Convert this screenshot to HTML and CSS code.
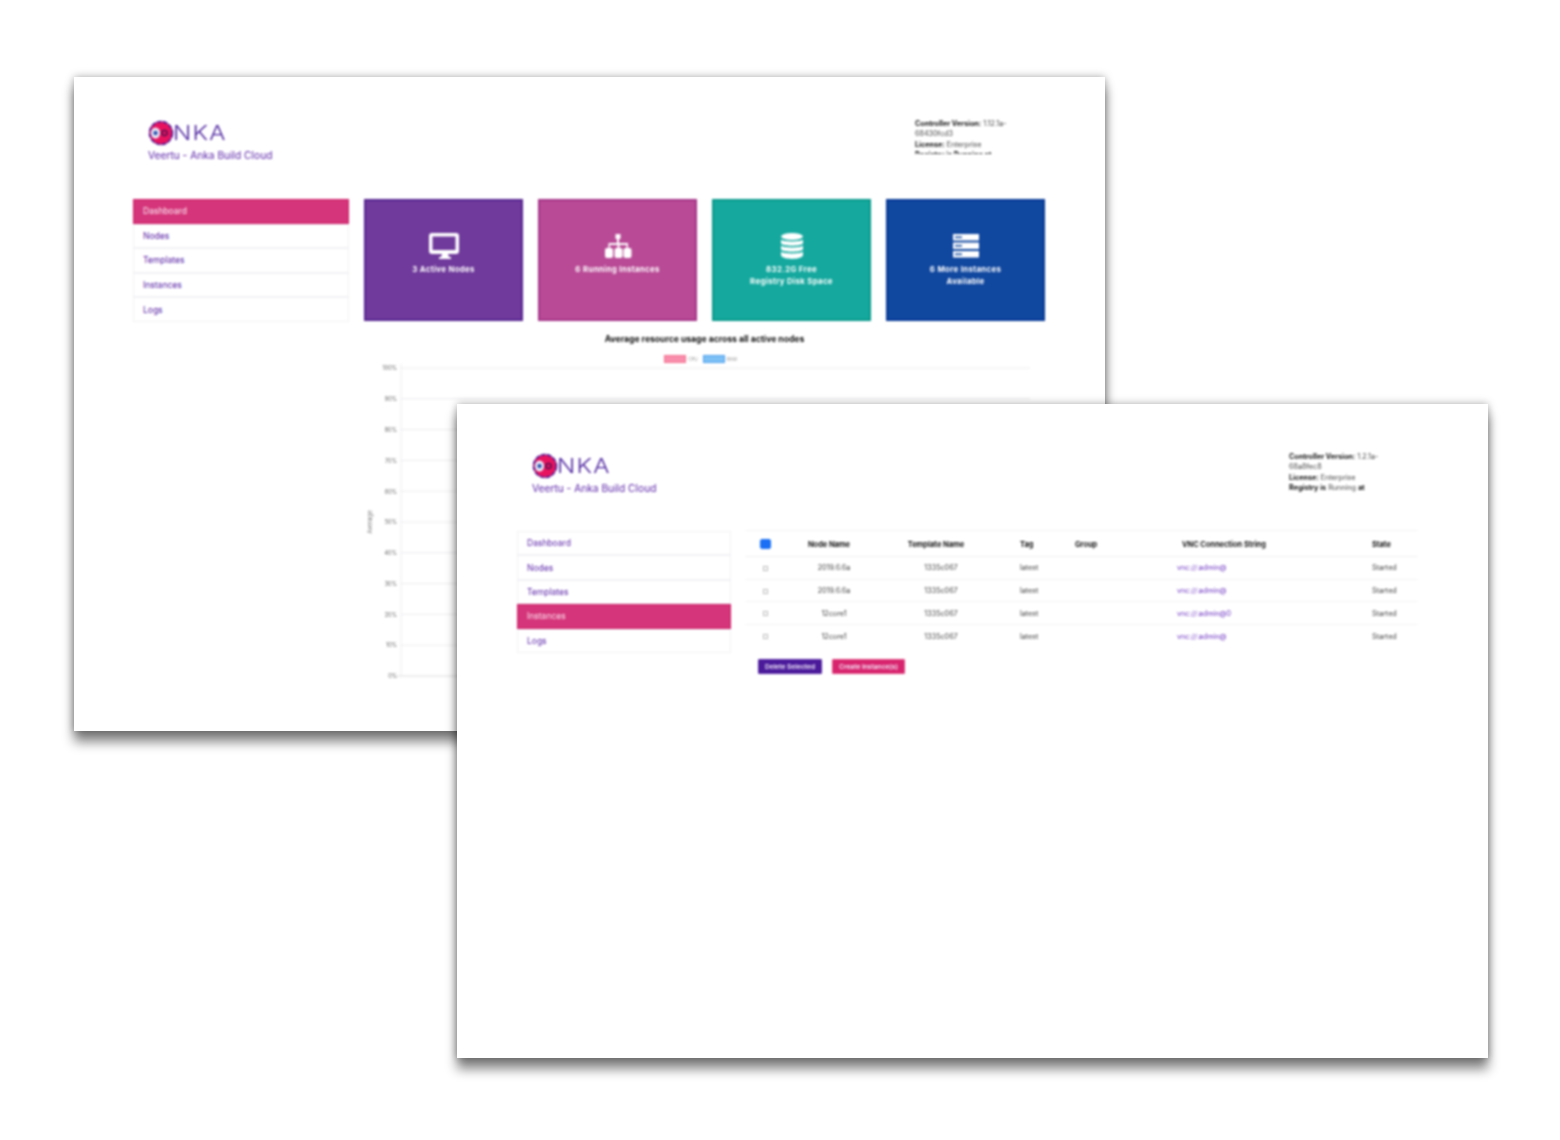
FILE: index.html
```html
<!DOCTYPE html>
<html lang="en">
<head>
    <meta charset="UTF-8" />
    <meta name="viewport" content="width=device-width, initial-scale=1" />
    <title>Anka Build Cloud</title>
    <link rel="stylesheet" href="styles.css">
</head>
<body>
    <div class="canvas">

        <!-- dashboard screenshot -->
        <section class="window window-back">
            <div class="content">
                <header class="page-head">
                    <div class="brand">
                        <div class="logo">
                            <svg class="logo-mark" viewBox="0 0 26 28">
                                <circle cx="13" cy="14" r="11.5" fill="#e8135f" stroke="#4a1a9a" stroke-width="1.6" stroke-dasharray="5 1.2"/>
                                <ellipse cx="7.5" cy="14" rx="4.6" ry="5.5" fill="#e6ecf8"/>
                                <circle cx="7.5" cy="14" r="2.2" fill="#2a4fb0"/>
                                <circle cx="16.5" cy="14" r="2.6" fill="none" stroke="#4a1050" stroke-width="1.4"/>
                            </svg>
                            <span class="logo-text">NKA</span>
                        </div>
                        <p class="brand-name">Veertu - Anka Build Cloud</p>
                    </div>
                    <div class="info">
                        <b>Controller Version:</b> 1.12.1a-<br>68430fcd3<br>
                        <b>License:</b> Enterprise<br>
                        <b>Registry is Running at</b>
                    </div>
                </header>
                <div class="page-body">
                    <nav class="side-nav">
                        <a class="active" href="#">Dashboard</a>
                        <a href="#">Nodes</a>
                        <a href="#">Templates</a>
                        <a href="#">Instances</a>
                        <a href="#">Logs</a>
                    </nav>
                    <main class="dash">
                        <div class="tiles">
                            <div class="tile tile-purple">
                                <svg class="tile-icon" viewBox="0 0 30 26">
                                    <path fill="#fff" d="M3 0h24a3 3 0 0 1 3 3v15a3 3 0 0 1-3 3h-8l1 3h2v2H10v-2h2l1-3H3a3 3 0 0 1-3-3V3a3 3 0 0 1 3-3zm.5 3.500v13.500h23V3.500z"/>
                                </svg>
                                <p>3 Active Nodes</p>
                            </div>
                            <div class="tile tile-pink">
                                <svg class="tile-icon" viewBox="0 0 30 26">
                                    <path fill="#fff" d="M12.500 1h5v5h-1.500v4h9v5h1.500a2 2 0 0 1 2 2v6a2 2 0 0 1-2 2h-4a2 2 0 0 1-2-2v-6a2 2 0 0 1 2-2h1v-3h-7v3h1a2 2 0 0 1 2 2v6a2 2 0 0 1-2 2h-4a2 2 0 0 1-2-2v-6a2 2 0 0 1 2-2h1v-3H7v3h1a2 2 0 0 1 2 2v6a2 2 0 0 1-2 2H4a2 2 0 0 1-2-2v-6a2 2 0 0 1 2-2h1.500v-5h8.500V6h-1.500z"/>
                                </svg>
                                <p>6 Running Instances</p>
                            </div>
                            <div class="tile tile-teal">
                                <svg class="tile-icon" viewBox="0 0 30 26">
                                    <ellipse cx="15" cy="3.500" rx="11" ry="3.500" fill="#fff"/>
                                    <path fill="#fff" d="M4 6.500c2 2.500 20 2.500 22 0v4c-2 3-20 3-22 0zM4 12.500c2 2.500 20 2.500 22 0v4c-2 3-20 3-22 0zM4 18.500c2 2.500 20 2.500 22 0v4c-2 4.500-20 4.500-22 0z"/>
                                </svg>
                                <p>832.2G Free<br>Registry Disk Space</p>
                            </div>
                            <div class="tile tile-blue">
                                <svg class="tile-icon" viewBox="0 0 30 26">
                                    <path fill="#fff" d="M2 1h26v6.500H2zM2 9.500h26V16H2zM2 18h26v6.500H2z"/>
                                    <path fill="#10479f" d="M4 3.500h7v1.500H4zM4 12h7v1.500H4zM4 20.500h7V22H4z"/>
                                </svg>
                                <p>6 More Instances<br>Available</p>
                            </div>
                        </div>
                        <h3 class="chart-title">Average resource usage across all active nodes</h3>
                        <div class="legend">
                            <span class="swatch swatch-cpu"></span><span>CPU</span>
                            <span class="swatch swatch-mem"></span><span>RAM</span>
                        </div>
                        <svg class="chart" viewBox="0 0 681 320">
                            <g class="grid">
                                <path d="M37 6h629M37 36.800h629M37 67.600h629M37 98.400h629M37 129.200h629M37 160h629M37 190.800h629M37 221.600h629M37 252.400h629M37 283.200h629"/>
                                <path d="M37 2v312"/>
                            </g>
                            <path class="baseline" d="M32 314h634"/>
                            <g class="ticks">
                                <text x="33" y="8">100%</text>
                                <text x="33" y="39">90%</text>
                                <text x="33" y="70">80%</text>
                                <text x="33" y="101">70%</text>
                                <text x="33" y="132">60%</text>
                                <text x="33" y="162">50%</text>
                                <text x="33" y="193">40%</text>
                                <text x="33" y="224">30%</text>
                                <text x="33" y="255">20%</text>
                                <text x="33" y="285">10%</text>
                                <text x="33" y="316">0%</text>
                            </g>
                            <text class="axis-name" transform="translate(8 160) rotate(-90)">Average</text>
                        </svg>
                    </main>
                </div>
            </div>
        </section>

        <!-- instances screenshot -->
        <section class="window window-front">
            <div class="content">
                <header class="page-head">
                    <div class="brand">
                        <div class="logo">
                            <svg class="logo-mark" viewBox="0 0 26 28">
                                <circle cx="13" cy="14" r="11.5" fill="#e8135f" stroke="#4a1a9a" stroke-width="1.6" stroke-dasharray="5 1.2"/>
                                <ellipse cx="7.5" cy="14" rx="4.6" ry="5.5" fill="#e6ecf8"/>
                                <circle cx="7.5" cy="14" r="2.2" fill="#2a4fb0"/>
                                <circle cx="16.5" cy="14" r="2.6" fill="none" stroke="#4a1050" stroke-width="1.4"/>
                            </svg>
                            <span class="logo-text">NKA</span>
                        </div>
                        <p class="brand-name">Veertu - Anka Build Cloud</p>
                    </div>
                    <div class="info">
                        <b>Controller Version:</b> 1.2.1a-<br>68a8fec8<br>
                        <b>License:</b> Enterprise<br>
                        <b>Registry is</b> Running <b>at</b>
                    </div>
                </header>
                <div class="page-body">
                    <nav class="side-nav">
                        <a href="#">Dashboard</a>
                        <a href="#">Nodes</a>
                        <a href="#">Templates</a>
                        <a class="active" href="#">Instances</a>
                        <a href="#">Logs</a>
                    </nav>
                    <main class="instances">
                        <table class="table">
                            <thead>
                                <tr>
                                    <th class="col-check"><span class="check check-on"></span></th>
                                    <th class="col-node">Node Name</th>
                                    <th class="col-template">Template Name</th>
                                    <th class="col-tag">Tag</th>
                                    <th class="col-group">Group</th>
                                    <th class="col-vnc">VNC Connection String</th>
                                    <th class="col-state">State</th>
                                </tr>
                            </thead>
                            <tbody>
                                <tr>
                                    <td class="col-check"><span class="check"></span></td>
                                    <td class="col-node">2019.6.6a</td>
                                    <td class="col-template">1335c067</td>
                                    <td class="col-tag">latest</td>
                                    <td class="col-group"></td>
                                    <td class="col-vnc"><a href="#">vnc://:admin@</a></td>
                                    <td class="col-state">Started</td>
                                </tr>
                                <tr>
                                    <td class="col-check"><span class="check"></span></td>
                                    <td class="col-node">2019.6.6a</td>
                                    <td class="col-template">1335c067</td>
                                    <td class="col-tag">latest</td>
                                    <td class="col-group"></td>
                                    <td class="col-vnc"><a href="#">vnc://:admin@</a></td>
                                    <td class="col-state">Started</td>
                                </tr>
                                <tr>
                                    <td class="col-check"><span class="check"></span></td>
                                    <td class="col-node">12core1</td>
                                    <td class="col-template">1335c067</td>
                                    <td class="col-tag">latest</td>
                                    <td class="col-group"></td>
                                    <td class="col-vnc"><a href="#">vnc://:admin@0</a></td>
                                    <td class="col-state">Started</td>
                                </tr>
                                <tr>
                                    <td class="col-check"><span class="check"></span></td>
                                    <td class="col-node">12core1</td>
                                    <td class="col-template">1335c067</td>
                                    <td class="col-tag">latest</td>
                                    <td class="col-group"></td>
                                    <td class="col-vnc"><a href="#">vnc://:admin@</a></td>
                                    <td class="col-state">Started</td>
                                </tr>
                            </tbody>
                        </table>
                        <div class="actions">
                            <button class="btn btn-delete" type="button">Delete Selected</button>
                            <button class="btn btn-create" type="button">Create Instance(s)</button>
                        </div>
                    </main>
                </div>
            </div>
        </section>

    </div>
</body>
</html>
```
FILE: styles.css
```css
* {
    box-sizing: border-box;
}
body {
    margin: 0;
    background: #fff;
    font-family: Inter, "Noto Sans", sans-serif;
}
.canvas {
    position: relative;
    width: 1560px;
    height: 1140px;
    overflow: hidden;
}

/* the two floating screenshots */
.window {
    position: absolute;
    width: 1031px;
    height: 654px;
    background: #fff;
    box-shadow: 0 11px 11px rgba(0,0,0,0.48), 0 0 8px rgba(0,0,0,0.34);
}
.window-back {
    left: 74px;
    top: 77px;
    padding: 42px 60px 0 59px;
}
.window-front {
    left: 457px;
    top: 404px;
    padding: 48px 70px 0 60px;
}
.content {
    filter: blur(0.85px);
}

/* header */
.page-head {
    display: flex;
    justify-content: space-between;
}
.window-back .page-head {
    height: 80px;
}
.window-front .page-head {
    height: 78px;
}
.brand {
    padding-left: 15px;
}
.logo {
    display: flex;
    align-items: center;
    height: 28px;
}
.logo-mark {
    width: 26px;
    height: 28px;
}
.logo-text {
    margin-left: -1px;
    font-size: 20px;
    font-weight: 300;
    letter-spacing: 1px;
    color: #4a1f9e;
    transform: scaleX(1.2);
    transform-origin: left center;
}
.brand-name {
    margin: 2px 0 0;
    font-size: 10.2px;
    line-height: 13px;
    color: #5a22a8;
}
.info {
    width: 120px;
    overflow: hidden;
    font-size: 7.2px;
    line-height: 10.4px;
    color: #444;
}
.info b {
    color: #111;
}
.window-back .info {
    height: 35px;
    margin-right: 10px;
}
.window-front .info {
    height: 42px;
    margin-right: 9px;
}

.page-body {
    display: flex;
}
.window-back .page-body {
    gap: 15px;
}
.window-front .page-body {
    gap: 14px;
}

/* side menu */
.side-nav {
    display: flex;
    flex-direction: column;
    flex: none;
}
.window-back .side-nav {
    width: 216px;
    height: 123px;
}
.window-front .side-nav {
    width: 214px;
    height: 122px;
    margin-top: 1px;
}
.side-nav a {
    display: flex;
    align-items: center;
    flex: 1;
    padding-left: 9px;
    background: #fff;
    border: 1px solid #f2f2f6;
    font-size: 8.5px;
    color: #5a22a8;
    text-decoration: none;
}
.side-nav a.active {
    background: #d5357a;
    border-color: #cf1f68;
    color: #fbe3ee;
}

/* dashboard */
.dash {
    width: 681px;
}
.tiles {
    display: flex;
    justify-content: space-between;
}
.tile {
    width: 159px;
    height: 122px;
    padding-top: 32px;
    border: 2px solid;
    text-align: center;
    color: #fff;
}
.tile-purple {
    background: #703a9c;
    border-color: #572490;
}
.tile-pink {
    background: #b94a96;
    border-color: #a63488;
}
.tile-teal {
    background: #14a89e;
    border-color: #07998c;
}
.tile-blue {
    background: #10479f;
    border-color: #073896;
}
.tile-icon {
    display: block;
    width: 30px;
    height: 26px;
    margin: 0 auto;
}
.tile p {
    margin: 4px 0 0;
    font-size: 7.8px;
    font-weight: 700;
    line-height: 12px;
    letter-spacing: 0.35px;
}
.chart-title {
    margin: 12px 0 0;
    font-size: 8.6px;
    font-weight: 700;
    line-height: 12px;
    text-align: center;
    color: #111;
}
.legend {
    display: flex;
    justify-content: center;
    align-items: center;
    gap: 2px;
    height: 8px;
    margin-top: 10px;
    padding-right: 8px;
    font-size: 4.5px;
    color: #999;
}
.swatch {
    width: 22px;
    height: 8px;
    border: 1px solid;
}
.swatch-mem {
    margin-left: 3px;
    background: #7cc0f5;
    border-color: #4f9fef;
}
.swatch-cpu {
    background: #f98eac;
    border-color: #f4708f;
}
.chart {
    display: block;
    width: 681px;
    height: 320px;
    margin-top: -1px;
}
.grid path {
    fill: none;
    stroke: #ececf0;
    stroke-width: 1;
}
.baseline {
    stroke: #ddd;
    stroke-width: 1;
}
.ticks text {
    font-size: 5.5px;
    text-anchor: end;
    fill: #666;
}
.axis-name {
    font-size: 6px;
    text-anchor: middle;
    fill: #777;
}

/* instances table */
.instances {
    width: 673px;
}
.table {
    width: 673px;
    table-layout: fixed;
    border-collapse: collapse;
    font-size: 7.2px;
    color: #444;
}
.table th {
    height: 26px;
    padding-top: 2px;
    font-size: 7.4px;
    font-weight: 700;
    color: #111;
    border-top: 1px solid #f4f4f6;
    border-bottom: 1px solid #f1f1f4;
}
.table td {
    height: 22.700px;
    border-bottom: 1px solid #f4f4f6;
}
.table tbody tr:last-child td {
    border-bottom: none;
}
.table a {
    color: #6a2fc0;
    text-decoration: none;
}
.col-check {
    width: 40px;
    text-align: center;
}
.col-node {
    width: 88px;
    text-align: center;
}
.col-template {
    width: 126px;
    text-align: center;
}
td.col-node,
td.col-template {
    padding-left: 11px;
}
.col-tag {
    width: 75px;
    padding-left: 21px;
    text-align: left;
}
.col-group {
    width: 102px;
    text-align: left;
}
.col-vnc {
    width: 195px;
    text-align: left;
}
th.col-vnc {
    padding-left: 6px;
}
.col-state {
    width: 47px;
    text-align: left;
}
.check {
    display: inline-block;
    width: 5px;
    height: 5px;
    border: 1px solid #bbb;
    vertical-align: middle;
}
.check-on {
    width: 11px;
    height: 10px;
    background: #1a6ff5;
    border-color: #1a6ff5;
    border-radius: 2px;
}
.actions {
    display: flex;
    gap: 10px;
    margin: 12px 0 0 13px;
}
.btn {
    height: 15px;
    padding: 0;
    border: 1px solid;
    border-radius: 1px;
    font-family: inherit;
    font-size: 6.6px;
    font-weight: 600;
    color: #f3ecfa;
}
.btn-delete {
    width: 64px;
    background: #4a1a9a;
    border-color: #5a2aa6;
}
.btn-create {
    width: 73px;
    background: #d8246e;
    border-color: #e0447f;
}
```
